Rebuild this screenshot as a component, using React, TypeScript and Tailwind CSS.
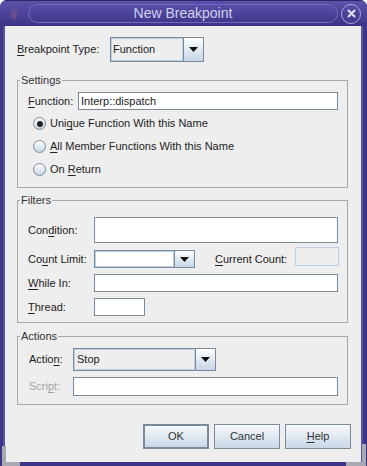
import type { ReactNode } from 'react'

const fieldBorder = 'border border-[#7a8a99]'

// mnemonic letter
function U({ children }: { children: ReactNode }) {
  return <span className="underline decoration-1 underline-offset-[2px]">{children}</span>
}

function Arrow() {
  return (
    <div className="flex w-[20px] shrink-0 items-center justify-center border border-l-0 border-[#7a8a99] bg-gradient-to-b from-[#ffffff] to-[#c6d6e6]">
      <svg width="9" height="5" viewBox="0 0 9 5">
        <path d="M0 0h9L4.5 5z" fill="#111" />
      </svg>
    </div>
  )
}

function Radio({ checked, children }: { checked?: boolean; children: ReactNode }) {
  return (
    <div className="flex h-[23px] items-center gap-[4px] pl-[15px]">
      <div className="flex h-[13px] w-[13px] items-center justify-center rounded-full border border-[#7a8a99] bg-gradient-to-b from-[#ffffff] to-[#c6d6e6]">
        {checked && <div className="h-[6px] w-[6px] rounded-full bg-[#222]" />}
      </div>
      <span>{children}</span>
    </div>
  )
}

function Group({ title, className, children }: { title: string; className: string; children: ReactNode }) {
  return (
    <fieldset className={`ml-[12px] w-[331px] border border-[#a9a9a9] ${className}`}>
      <legend className="ml-[2px] px-[1px] leading-[14px] text-[#333]">{title}</legend>
      {children}
    </fieldset>
  )
}

function Button({ children, focused }: { children: ReactNode; focused?: boolean }) {
  return (
    <button
      className={`flex h-[25px] w-[66px] items-center justify-center bg-gradient-to-b from-[#f7f9fc] to-[#c9d8e7] text-[#333] ${
        focused ? 'border-2 border-[#7a8a99]' : 'border border-[#7a8a99]'
      }`}
    >
      {children}
    </button>
  )
}

function TitleBar() {
  return (
    <div className="flex h-[26px] shrink-0 items-center bg-gradient-to-b from-[#5b53ab] to-[#3c3487] border-t border-[#2c2566]">
      <div className="flex w-[28px] justify-center">
        <div className="h-[10px] w-[6px] rounded-full bg-[#6b4f8e] blur-[1px]" />
      </div>
      <div className="flex h-[19px] w-[310px] items-center justify-center rounded-full border border-[#7169c2] font-['Liberation_Sans',Arial,sans-serif] text-[14px] text-[#cfd0ee]">
        New Breakpoint
      </div>
      <div className="ml-[3px] flex h-[20px] w-[20px] items-center justify-center rounded-full border-[1.5px] border-[#aba7dc]">
        <svg width="9" height="9" viewBox="0 0 9 9">
          <path d="M1.5 1.5l6 6M7.5 1.5l-6 6" stroke="#e4e3f6" strokeWidth="2" strokeLinecap="round" />
        </svg>
      </div>
    </div>
  )
}

export default function App() {
  return (
    <div className="relative flex h-[466px] w-[367px] flex-col overflow-hidden rounded-t-[7px] bg-[#3d3586] font-['Liberation_Sans',Arial,sans-serif] text-[11px] text-[#222]">
      <TitleBar />

      <div className="ml-[5px] mr-[6px] flex h-[436px] flex-col bg-[#eeeeee] shadow-[-2px_0_0_#5a52a6,2px_0_0_#5a52a6]">
        {/* type */}
        <div className="ml-[12px] mt-[11px] flex h-[25px] items-center">
          <span className="w-[93px]">
            <U>B</U>reakpoint Type:
          </span>
          <div className="flex h-[25px] w-[94px]">
            <div className={`flex flex-1 items-center ${fieldBorder} bg-[#eeeeee] px-[1px] shadow-[inset_0_0_0_1px_#b8cfe5]`}>
              <span className="pl-[1px]">Function</span>
            </div>
            <Arrow />
          </div>
        </div>

        <Group title="Settings" className="mt-[11px] pb-[6px]">
          <div className="mt-[5px] flex h-[18px] items-center pl-[10px]">
            <span className="w-[50px]">
              <U>F</U>unction:
            </span>
            <div className={`flex h-[18px] w-[260px] items-center ${fieldBorder} bg-white pl-[2px]`}>Interp::dispatch</div>
          </div>
          <div className="mt-[2px]">
            <Radio checked>
              Uni<U>q</U>ue Function With this Name
            </Radio>
            <Radio>
              <U>A</U>ll Member Functions With this Name
            </Radio>
            <Radio>
              On <U>R</U>eturn
            </Radio>
          </div>
        </Group>

        <Group title="Filters" className="mt-[5px] pb-[6px]">
          <div className="mt-[10px] flex items-center pl-[10px]">
            <span className="w-[66px]">
              Con<U>d</U>ition:
            </span>
            <div className={`h-[26px] w-[244px] ${fieldBorder} bg-white`} />
          </div>
          <div className="mt-[7px] flex items-center pl-[10px]">
            <span className="w-[66px]">
              Co<U>u</U>nt Limit:
            </span>
            <div className="flex h-[18px] w-[101px]">
              <div className={`flex-1 ${fieldBorder} bg-white shadow-[inset_0_0_0_1px_#b8cfe5]`} />
              <Arrow />
            </div>
            <span className="ml-[20px] w-[80px]">
              <U>C</U>urrent Count:
            </span>
            <div className="-mt-[5px] h-[19px] w-[44px] border border-[#b8cfe5] bg-[#eeeeee]" />
          </div>
          <div className="mt-[6px] flex items-center pl-[10px]">
            <span className="w-[66px]">
              <U>W</U>hile In:
            </span>
            <div className={`h-[18px] w-[244px] ${fieldBorder} bg-white`} />
          </div>
          <div className="mt-[6px] flex items-center pl-[10px]">
            <span className="w-[66px]">
              <U>T</U>hread:
            </span>
            <div className={`h-[18px] w-[51px] ${fieldBorder} bg-white`} />
          </div>
        </Group>

        <Group title="Actions" className="mt-[6px] pb-[8px]">
          <div className="mt-[5px] flex items-center pl-[11px]">
            <span className="w-[44px]">
              Actio<U>n</U>:
            </span>
            <div className="flex h-[23px] w-[143px]">
              <div className={`flex flex-1 items-center ${fieldBorder} bg-[#eeeeee] pl-[3px] shadow-[inset_0_0_0_1px_#b8cfe5]`}>Stop</div>
              <Arrow />
            </div>
          </div>
          <div className="mt-[6px] flex items-center pl-[11px]">
            <span className="w-[44px] text-[#a3a3a3]">
              Scri<U>p</U>t:
            </span>
            <div className={`h-[19px] w-[265px] ${fieldBorder} bg-white`} />
          </div>
        </Group>

        <div className="mt-[19px] flex justify-end gap-[5px] pr-[10px]">
          <Button focused>OK</Button>
          <Button>Cancel</Button>
          <Button>
            <U>H</U>elp
          </Button>
        </div>
      </div>

      {/* resize grips on the frame */}
      <div className="absolute bottom-0 left-[2px] h-[20px] w-[18px] border-b-[4px] border-l-[4px] border-[#a9a9b4]" />
      <div className="absolute bottom-0 right-[1px] h-[22px] w-[20px] border-b-[4px] border-r-[4px] border-[#a9a9b4]" />
    </div>
  )
}
